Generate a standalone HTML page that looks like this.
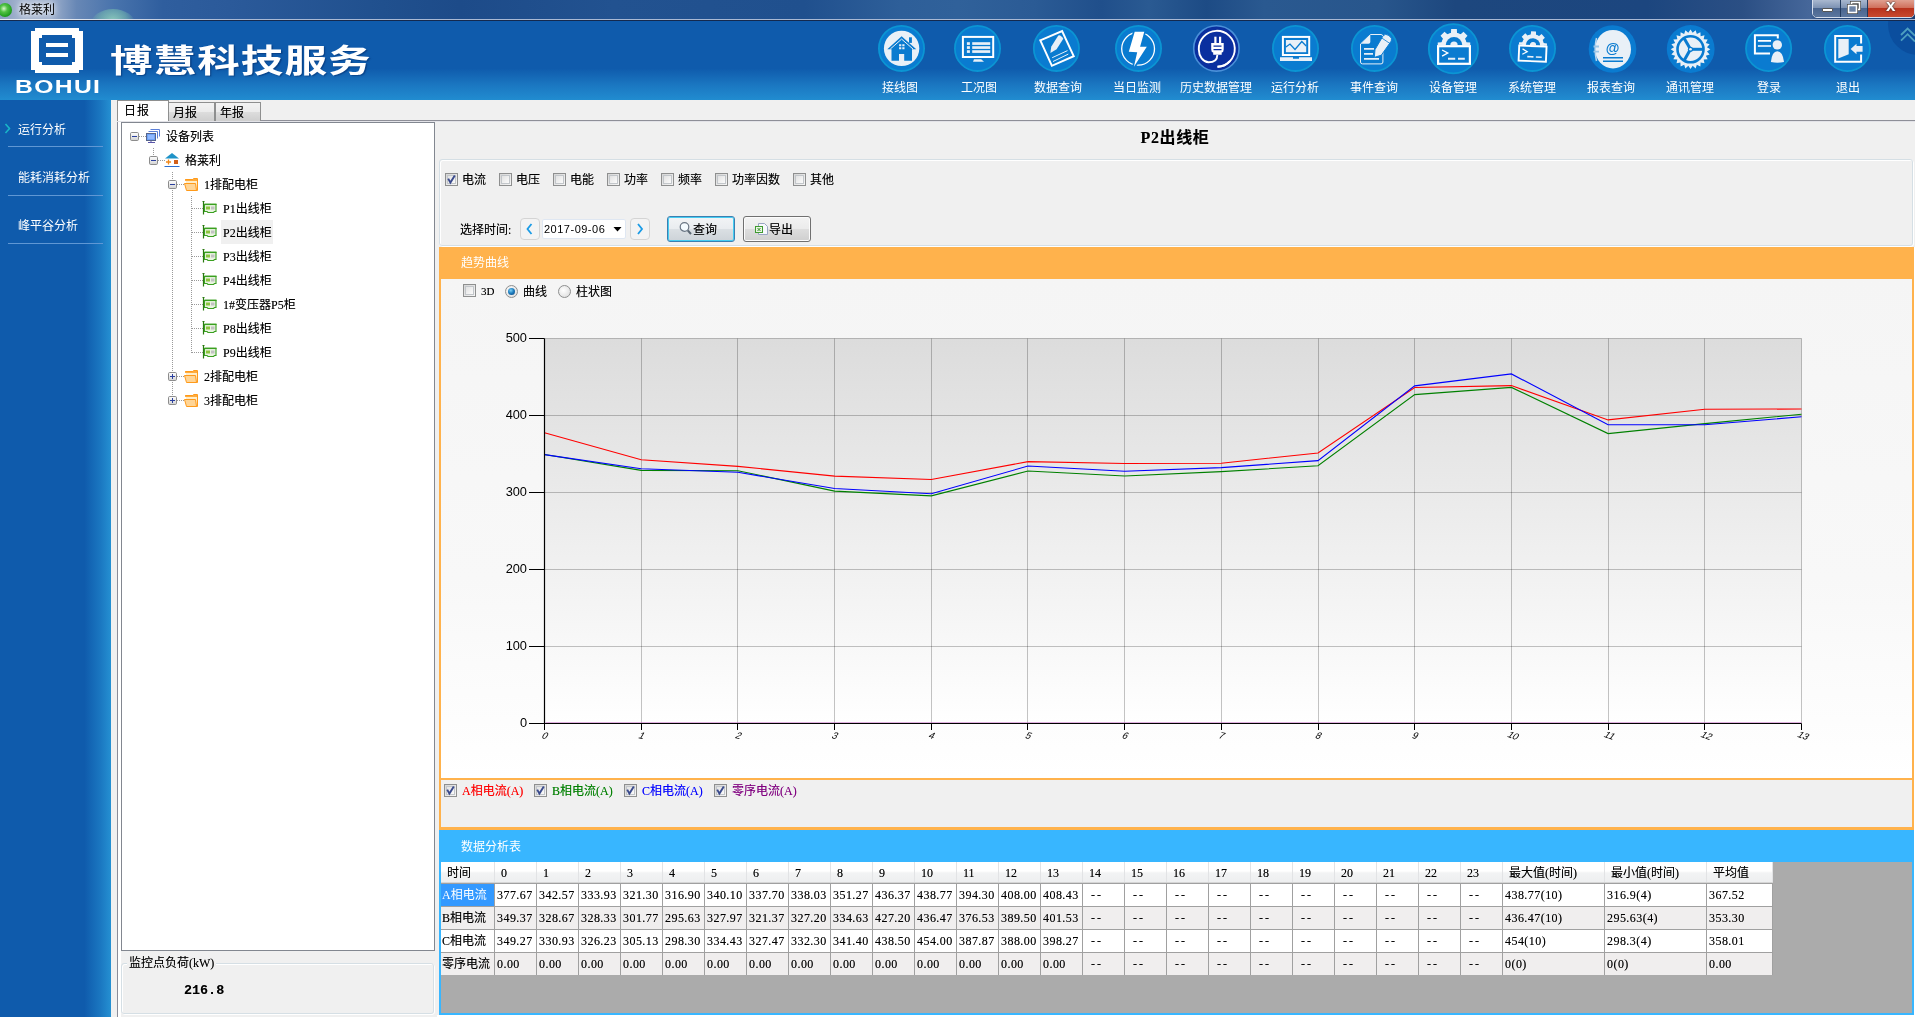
<!DOCTYPE html><html><head><meta charset="utf-8"><title>格莱利</title><style>
*{box-sizing:border-box;margin:0;padding:0}
html,body{width:1915px;height:1017px;overflow:hidden;background:#f0f0f0}
body{position:relative;font-family:"Liberation Serif","Noto Sans CJK SC",serif;font-size:12px;color:#000;line-height:14px}
.a{position:absolute}
.t{position:absolute;white-space:nowrap;line-height:14px;height:14px;text-shadow:0 0 0 rgba(0,0,0,.45)}
#titlebar{left:0;top:0;width:1915px;height:19px;background:linear-gradient(to right,#8a9fc0 0,#a5b5d0 1.2%,#a0b1cd 2.6%,#6787b5 4%,#4873ac 6%,#2f5e9e 8.500%,#2b5a9a 12%,#20508e 20%,#1d4b89 24%,#225290 32%,#20508e 42%,#2e5f99 47%,#30619a 50%,#2b5b95 54%,#204f8b 57.500%,#2a5a92 60%,#1d4b85 63%,#2a5990 66%,#28568c 72%,#1d477e 76%,#1c467f 86%,#2b4f84 91%,#46679a 94.500%,#2a4a7c 95%,#1a3f74 100%)}
#hdr{left:0;top:21px;width:1915px;height:79px;background:linear-gradient(#0f5bac 0,#0f5bac 60%,#1b78c2 82%,#218cd0 100%)}
#side{left:0;top:100px;width:111px;height:917px;background:linear-gradient(to right,#0f5bac 0,#0f5bac 76%,#1a76c0 90%,#2590d2 100%)}
.sl{position:absolute;left:8px;width:95px;height:1px;background:#5f97d4}
.st{position:absolute;left:18px;color:#fff;font-size:12px;white-space:nowrap;line-height:14px}
.nav{position:absolute;top:21px;width:79px;height:79px;text-align:center}
.nav .c{position:absolute;left:15px;top:3px;width:49px;height:49px;border-radius:50%;background:#0a7bd0;border:2px solid #0d8fd6}
.nav svg{position:absolute;left:15px;top:3px;width:49px;height:49px}
.nav .l{position:absolute;left:-10px;width:99px;top:59px;color:#fff;font-size:12px;line-height:14px;text-align:center;white-space:nowrap}
.cb{position:absolute;width:13px;height:13px;border:1px solid #8e8f8f;background:linear-gradient(135deg,#d6d6d6,#f6f6f6)}
.cb i{position:absolute;left:1px;top:1px;width:9px;height:9px;border:1px solid #c2c6ca;background:linear-gradient(135deg,#e2e2e2,#fbfbfb)}
.cb svg{position:absolute;left:0;top:0}
.rb{position:absolute;width:13px;height:13px;border-radius:50%;border:1px solid #8e8f8f;background:radial-gradient(circle at 40% 40%,#fff,#d8d8d8)}
</style></head><body><div id="w" style="position:absolute;left:0;top:0;width:1915px;height:1017px;will-change:transform">
<div id="titlebar" class="a"></div>
<div class="a" style="left:0;top:19px;width:1915px;height:1px;background:linear-gradient(to right,#e8edf4 0,#dfe5ef 4%,#a9b9d4 12%,#a9b9d4 100%)"></div>
<div class="a" style="left:0;top:20px;width:1915px;height:1px;background:#14294e"></div>
<div class="a" style="left:88px;top:6px;width:50px;height:13px;overflow:hidden"><div class="a" style="left:3px;top:3px;width:44px;height:30px;border-radius:50%;background:radial-gradient(ellipse at 50% 40%,rgba(150,215,190,.85) 0,rgba(120,190,175,.55) 45%,rgba(90,150,170,0) 72%)"></div></div>
<div class="a" style="left:-2px;top:3px;width:14px;height:14px;border-radius:50%;background:radial-gradient(circle at 42% 40%,#dcf6cc 0,#52c244 30%,#1d9a1d 70%,#118011 100%)"></div>
<div class="t" style="left:19px;top:3px;font-size:12px;color:#000;text-shadow:0 0 5px #fff,0 0 8px #fff">格莱利</div>
<div class="a" style="left:1812px;top:-3px;width:103px;height:21px;border:1px solid #d6dfee;border-radius:0 0 5px 5px;background:#223a5e"></div>
<div class="a" style="left:1813px;top:0;width:27px;height:17px;border-radius:0 0 0 4px;background:linear-gradient(#a9b8cf 0,#7e93b4 45%,#4a658f 50%,#5b769e 100%)"></div>
<div class="a" style="left:1841px;top:0;width:26px;height:17px;background:linear-gradient(#a9b8cf 0,#7e93b4 45%,#4a658f 50%,#5b769e 100%)"></div>
<div class="a" style="left:1868px;top:0;width:46px;height:17px;border-radius:0 0 4px 0;background:linear-gradient(#e0a090 0,#d0705c 45%,#b8321c 50%,#c8492e 100%)"></div>
<div class="a" style="left:1822px;top:8px;width:11px;height:4px;background:#fff;border:1px solid #555;border-radius:1px"></div>
<svg class="a" style="left:1846px;top:1px" width="16" height="13" viewBox="0 0 16 13"><rect x="5.5" y="1.5" width="8" height="7" fill="none" stroke="#444" stroke-width="3"/><rect x="5.5" y="1.5" width="8" height="7" fill="none" stroke="#fff" stroke-width="1.6"/><rect x="2.5" y="4.5" width="8" height="7" fill="#6d83a6" stroke="#444" stroke-width="3"/><rect x="2.5" y="4.5" width="8" height="7" fill="#6d83a6" stroke="#fff" stroke-width="1.6"/></svg>
<div class="t" style="left:1886px;top:-3px;font-family:'Liberation Sans',sans-serif;font-weight:bold;font-size:17px;line-height:18px;height:18px;color:#fff;text-shadow:0 0 1px #333,0 0 2px #333">x</div>
<div id="hdr" class="a"></div>
<svg class="a" style="left:30px;top:27px" width="54" height="47" viewBox="0 0 54 47"><path d="M5 1h44v3h4v39h-4v3H5v-3H1V4h4z" fill="#fff"/><path d="M12 8h30v3h3v24h-3v3H12v-3H9V11h3z" fill="#0f5bac"/><rect x="16" y="16" width="22" height="4" fill="#fff"/><rect x="16" y="26" width="22" height="4" fill="#fff"/></svg>
<div class="t" style="left:15px;top:77px;font-family:'Liberation Sans',sans-serif;font-weight:bold;font-size:18px;line-height:20px;height:20px;color:#fff;letter-spacing:1px;text-shadow:none;transform:scaleX(1.37);transform-origin:0 0">BOHUI</div>
<div class="t" style="left:110px;top:41px;font-family:'Liberation Sans','Noto Sans CJK SC',sans-serif;font-weight:bold;font-size:32px;line-height:40px;height:40px;color:#fff;letter-spacing:.8px;transform:scaleX(1.33);transform-origin:0 0;text-shadow:1px 1px 1px rgba(0,40,100,.5)">博慧科技服务</div>
<svg class="a" style="left:871px;top:21px" width="60" height="58" viewBox="871 21 60 58"><circle cx="901.5" cy="48.4" r="22.60" fill="#0a7bd0" stroke="#0b95d3" stroke-width="1.8"/><circle cx="901.6" cy="48.4" r="17.7" fill="#e9f0f7"/><path d="M901.6 36.300L916.300 49.200H912V60.700H904.200V54.100H899V60.700H891.500V49.200H887.300z" fill="#0a7bd0"/><path d="M890.300 49L901.600 39.100L913 49" fill="none" stroke="#e9f0f7" stroke-width="1"/><rect x="909" y="37.300" width="2.900" height="5.600" fill="#0a7bd0"/><path d="M899.100 44.200h2.200v2h-2.200zM902.300 44.200h2.200v2h-2.200zM899.100 47.200h2.200v2h-2.200zM902.300 47.200h2.200v2h-2.200z" fill="#e9f0f7"/></svg>
<div class="t" style="left:840px;top:81px;width:120px;text-align:center;color:#fff;text-shadow:none">接线图</div>
<svg class="a" style="left:947px;top:21px" width="60" height="58" viewBox="947 21 60 58"><circle cx="977.5" cy="48.4" r="22.60" fill="#0a7bd0" stroke="#0b95d3" stroke-width="1.8"/><rect x="962.900" y="36.900" width="30.300" height="20.100" fill="none" stroke="#ffffff" stroke-width="2"/><path d="M974 59.200H981.200L984 61.800H973z" fill="#e9f0f7"/><rect x="966.900" y="42.2" width="3" height="2.700" fill="#e9f0f7"/><rect x="972.200" y="42.2" width="18" height="2.700" fill="#e9f0f7"/><rect x="966.900" y="46.2" width="3" height="2.700" fill="#e9f0f7"/><rect x="972.200" y="46.2" width="18" height="2.700" fill="#e9f0f7"/><rect x="966.900" y="50.2" width="3" height="2.700" fill="#e9f0f7"/><rect x="972.200" y="50.2" width="18" height="2.700" fill="#e9f0f7"/></svg>
<div class="t" style="left:919px;top:81px;width:120px;text-align:center;color:#fff;text-shadow:none">工况图</div>
<svg class="a" style="left:1026px;top:21px" width="60" height="58" viewBox="1026 21 60 58"><circle cx="1056.4" cy="48.4" r="22.60" fill="#0a7bd0" stroke="#0b95d3" stroke-width="1.8"/><path d="M1040.300 40.300L1062.100 31L1073.700 56.200L1051.900 65.800z" fill="none" stroke="#ffffff" stroke-width="2" stroke-linejoin="miter"/><path d="M1058.300 35.500Q1060.500 34.300 1063.300 38.800L1056.600 49.300L1050.400 53L1051.200 46.800z" fill="#e9f0f7"/><path d="M1052.200 57.700L1067.500 50.600M1053 61.500L1068.300 54.100" stroke="#e9f0f7" stroke-width="1" fill="none"/></svg>
<div class="t" style="left:998px;top:81px;width:120px;text-align:center;color:#fff;text-shadow:none">数据查询</div>
<svg class="a" style="left:1108px;top:21px" width="60" height="58" viewBox="1108 21 60 58"><circle cx="1138.5" cy="48.4" r="22.60" fill="#0a7bd0" stroke="#0b95d3" stroke-width="1.8"/><circle cx="1138.100" cy="48.800" r="16.400" fill="none" stroke="#ffffff" stroke-width="1.300"/><path d="M1134.700 31.700H1144.300L1140.100 46.800H1146.800L1133.900 66.800L1137.200 52.200L1128.800 51.800z" fill="#0a7bd0" stroke="#0a7bd0" stroke-width="3.400" stroke-linejoin="miter"/><path d="M1134.700 31.700H1144.300L1140.100 46.800H1146.800L1133.900 66.800L1137.200 52.200L1128.800 51.800z" fill="#ffffff"/></svg>
<div class="t" style="left:1077px;top:81px;width:120px;text-align:center;color:#fff;text-shadow:none">当日监测</div>
<svg class="a" style="left:1186px;top:21px" width="60" height="58" viewBox="1186 21 60 58"><circle cx="1216.4" cy="48.4" r="22.70" fill="#0a2f9f" stroke="#4a90d8" stroke-width="1.6"/><path d="M1217.500 66.800A18 18 0 1 0 1198.800 49.500A10 13 0 0 0 1208.500 62.300C1214 62.300 1217.300 60 1217.300 55" fill="none" stroke="#ffffff" stroke-width="1.900"/><path d="M1217.500 66.800A18 18 0 0 0 1230 61" fill="none" stroke="#ffffff" stroke-width="1.900"/><path d="M1211.200 43H1223.700V49.500Q1223.700 52 1221.700 52.500V54.700H1213.200V52.500Q1211.200 52 1211.200 49.500z" fill="#ffffff"/><rect x="1214.300" y="36.700" width="2.200" height="6.500" fill="#ffffff"/><rect x="1219" y="36.700" width="2.200" height="6.500" fill="#ffffff"/><path d="M1213.500 46.200H1221.500M1213.500 49.700H1221.500" stroke="#0a2f9f" stroke-width="1.300"/></svg>
<div class="t" style="left:1156px;top:81px;width:120px;text-align:center;color:#fff;text-shadow:none">历史数据管理</div>
<svg class="a" style="left:1265px;top:21px" width="60" height="58" viewBox="1265 21 60 58"><circle cx="1295.5" cy="48.4" r="22.60" fill="#0a7bd0" stroke="#0b95d3" stroke-width="1.8"/><rect x="1282.900" y="36.900" width="26.300" height="18.100" fill="none" stroke="#ffffff" stroke-width="2"/><rect x="1285.900" y="40" width="20.300" height="12.200" fill="#e9f0f7"/><path d="M1285.900 47L1290 44L1295 49.500L1301.800 41.500L1306.200 46" fill="none" stroke="#0a7bd0" stroke-width="1.300"/><path d="M1280 57.200H1293V58.700H1299V57.200H1312V61H1280z" fill="#e9f0f7"/></svg>
<div class="t" style="left:1235px;top:81px;width:120px;text-align:center;color:#fff;text-shadow:none">运行分析</div>
<svg class="a" style="left:1344px;top:21px" width="60" height="58" viewBox="1344 21 60 58"><circle cx="1374.5" cy="48.4" r="22.60" fill="#0a7bd0" stroke="#0b95d3" stroke-width="1.8"/><path d="M1370.500 34.500H1381Q1382.900 34.500 1382.900 36.500V62Q1382.900 63.900 1381 63.900H1362.500Q1360.500 63.900 1360.500 62V44z" fill="none" stroke="#e9f0f7" stroke-width="1"/><path d="M1361 43.800L1370.300 34.800V42Q1370.300 43.800 1368.500 43.800z" fill="#e9f0f7"/><path d="M1364 48.800H1374M1364 53.900H1373M1364 58.900H1379" stroke="#e9f0f7" stroke-width="1.800" fill="none"/><path d="M1383.200 35.600Q1385.300 33.200 1388.800 35.400Q1392.800 38.200 1391.300 41L1381.300 55.200L1374.300 57.400L1375 49.600z" fill="#e9f0f7" stroke="#0a7bd0" stroke-width="1"/><path d="M1381.500 37.800L1389.800 43.400" stroke="#0a7bd0" stroke-width=".800"/></svg>
<div class="t" style="left:1314px;top:81px;width:120px;text-align:center;color:#fff;text-shadow:none">事件查询</div>
<svg class="a" style="left:1423px;top:21px" width="60" height="58" viewBox="1423 21 60 58"><circle cx="1453.4" cy="48.8" r="24.60" fill="#0a7bd0" stroke="#0b95d3" stroke-width="1.8"/><g transform="translate(1454.0 48.8) rotate(0.0) scale(1.000)"><clipPath id="cg1454"><rect x="-20" y="-24" width="40" height="20.500"/></clipPath><g clip-path="url(#cg1454)"><path d="M-3.07 -15.62L-2.84 -19.75L2.84 -19.75L3.07 -15.62L6.39 -14.24L9.49 -17.00L13.50 -12.99L10.74 -9.89L12.12 -6.57L16.25 -6.34L16.25 -0.66L12.12 -0.43L10.74 2.89L13.50 5.99L9.49 10.00L6.39 7.24L3.07 8.62L2.84 12.75L-2.84 12.75L-3.07 8.62L-6.39 7.24L-9.49 10.00L-13.50 5.99L-10.74 2.89L-12.12 -0.43L-16.25 -0.66L-16.25 -6.34L-12.12 -6.57L-10.74 -9.89L-13.50 -12.99L-9.49 -17.00L-6.39 -14.24z" fill="#e9f0f7"/><circle cx="0" cy="-3.500" r="12.800" fill="#e9f0f7"/><circle cx="0" cy="-3.500" r="8.300" fill="#0a7bd0"/><circle cx="0" cy="-3.500" r="3.700" fill="#e9f0f7"/></g><rect x="-15.900" y="-2.600" width="31.800" height="17.600" fill="#0a7bd0" stroke="#ffffff" stroke-width="2.200"/><path d="M-11.900 1.200L-6.300 4.200L-11.900 7.400" fill="none" stroke="#ffffff" stroke-width="1.400"/><path d="M-6 9.900H1.200M4 9.900H10.800" stroke="#e9f0f7" stroke-width="1.900"/></g></svg>
<div class="t" style="left:1393px;top:81px;width:120px;text-align:center;color:#fff;text-shadow:none">设备管理</div>
<svg class="a" style="left:1502px;top:21px" width="60" height="58" viewBox="1502 21 60 58"><circle cx="1532.5" cy="48.4" r="22.60" fill="#0a7bd0" stroke="#0b95d3" stroke-width="1.8"/><g transform="translate(1532.8 48.3) rotate(2.5) scale(0.860)"><clipPath id="cg1532"><rect x="-20" y="-24" width="40" height="20.500"/></clipPath><g clip-path="url(#cg1532)"><path d="M-3.07 -15.62L-2.84 -19.75L2.84 -19.75L3.07 -15.62L6.39 -14.24L9.49 -17.00L13.50 -12.99L10.74 -9.89L12.12 -6.57L16.25 -6.34L16.25 -0.66L12.12 -0.43L10.74 2.89L13.50 5.99L9.49 10.00L6.39 7.24L3.07 8.62L2.84 12.75L-2.84 12.75L-3.07 8.62L-6.39 7.24L-9.49 10.00L-13.50 5.99L-10.74 2.89L-12.12 -0.43L-16.25 -0.66L-16.25 -6.34L-12.12 -6.57L-10.74 -9.89L-13.50 -12.99L-9.49 -17.00L-6.39 -14.24z" fill="#e9f0f7"/><circle cx="0" cy="-3.500" r="12.800" fill="#e9f0f7"/><circle cx="0" cy="-3.500" r="8.300" fill="#0a7bd0"/><circle cx="0" cy="-3.500" r="3.700" fill="#e9f0f7"/></g><rect x="-15.900" y="-2.600" width="31.800" height="17.600" fill="#0a7bd0" stroke="#ffffff" stroke-width="2.200"/><path d="M-11.900 1.200L-6.300 4.200L-11.900 7.400" fill="none" stroke="#ffffff" stroke-width="1.400"/><path d="M-6 9.900H1.200M4 9.900H10.800" stroke="#e9f0f7" stroke-width="1.900"/></g></svg>
<div class="t" style="left:1472px;top:81px;width:120px;text-align:center;color:#fff;text-shadow:none">系统管理</div>
<svg class="a" style="left:1582px;top:21px" width="60" height="58" viewBox="1582 21 60 58"><circle cx="1612.5" cy="49.0" r="23.800" fill="#0a7bd0"/><ellipse cx="1613" cy="49.200" rx="18" ry="19.300" fill="#e9f0f7"/><path d="M1596.500 38Q1593.800 49 1596.500 61" fill="none" stroke="#b9d6ee" stroke-width="1.500"/><path d="M1593.500 46.500H1599M1593.500 51.700H1599" stroke="#9cc6e6" stroke-width="1.800"/><text x="1612.500" y="53" font-family="Liberation Sans, sans-serif" font-size="14" font-weight="bold" text-anchor="middle" fill="#0a7bd0">@</text><path d="M1603 57.800H1623M1603 61.200H1623" stroke="#0a7bd0" stroke-width="1.500"/></svg>
<div class="t" style="left:1551px;top:81px;width:120px;text-align:center;color:#fff;text-shadow:none">报表查询</div>
<svg class="a" style="left:1660px;top:21px" width="60" height="58" viewBox="1660 21 60 58"><circle cx="1690.7" cy="49.0" r="23.900" fill="#0a7bd0"/><path d="M1710.30 49.30L1706.96 51.47L1709.63 54.42L1705.84 55.65L1707.65 59.20L1703.67 59.41L1704.50 63.30L1700.61 62.47L1700.40 66.45L1696.85 64.64L1695.62 68.43L1692.67 65.76L1690.50 69.10L1688.33 65.76L1685.38 68.43L1684.15 64.64L1680.60 66.45L1680.39 62.47L1676.50 63.30L1677.33 59.41L1673.35 59.20L1675.16 55.65L1671.37 54.42L1674.04 51.47L1670.70 49.30L1674.04 47.13L1671.37 44.18L1675.16 42.95L1673.35 39.40L1677.33 39.19L1676.50 35.30L1680.39 36.13L1680.60 32.15L1684.15 33.96L1685.38 30.17L1688.33 32.84L1690.50 29.50L1692.67 32.84L1695.62 30.17L1696.85 33.96L1700.40 32.15L1700.61 36.13L1704.50 35.30L1703.67 39.19L1707.65 39.40L1705.84 42.95L1709.63 44.18L1706.96 47.13 z" fill="#e9f0f7"/><circle cx="1690.5" cy="49.3" r="13" fill="#e9f0f7" stroke="#0a7bd0" stroke-width="2.600"/><path d="M1690.50 49.30L1703.00 49.30" stroke="#0a7bd0" stroke-width="3"/><path d="M1690.50 49.30L1684.25 60.13" stroke="#0a7bd0" stroke-width="3"/><path d="M1690.50 49.30L1684.25 38.47" stroke="#0a7bd0" stroke-width="3"/><circle cx="1690.5" cy="49.3" r="2.600" fill="#0a7bd0"/><circle cx="1690.5" cy="49.3" r="1.300" fill="#e9f0f7"/></svg>
<div class="t" style="left:1630px;top:81px;width:120px;text-align:center;color:#fff;text-shadow:none">通讯管理</div>
<svg class="a" style="left:1738px;top:21px" width="60" height="58" viewBox="1738 21 60 58"><circle cx="1768.6" cy="48.5" r="22.60" fill="#0a7bd0" stroke="#0b95d3" stroke-width="1.8"/><path d="M1777.800 38.500V35.200H1754.900V53.600H1770" fill="none" stroke="#ffffff" stroke-width="2"/><path d="M1757.900 40.900H1771M1757.900 46H1771" stroke="#ffffff" stroke-width="1.600"/><circle cx="1777.300" cy="44.900" r="5.600" fill="#0a7bd0"/><circle cx="1777.300" cy="44.900" r="4.700" fill="#e9f0f7"/><path d="M1769.800 63.500Q1771 50.200 1777.300 50.200Q1783.800 50.200 1785 63.500z" fill="#0a7bd0"/><path d="M1770.900 62Q1772 51.200 1777.300 51.200Q1782.800 51.200 1784 62Q1777.500 63.300 1770.900 62z" fill="#e9f0f7"/></svg>
<div class="t" style="left:1709px;top:81px;width:120px;text-align:center;color:#fff;text-shadow:none">登录</div>
<svg class="a" style="left:1817px;top:21px" width="60" height="58" viewBox="1817 21 60 58"><circle cx="1847.4" cy="48.5" r="22.60" fill="#0a7bd0" stroke="#0b95d3" stroke-width="1.8"/><path d="M1861.100 43.500V35.900H1835.200V61.800H1861.100V54.500" fill="none" stroke="#ffffff" stroke-width="2"/><path d="M1838.300 38.900H1848.700V54.300L1838.300 58.400z" fill="#e9f0f7"/><path d="M1850.600 48.900L1856.500 43.800V46H1862.600V51.800H1856.500V54.300z" fill="#e9f0f7"/></svg>
<div class="t" style="left:1788px;top:81px;width:120px;text-align:center;color:#fff;text-shadow:none">退出</div>
<div class="a" style="left:1885px;top:21px;width:30px;height:40px;overflow:hidden"><div class="a" style="left:2.500px;top:-27.500px;width:61px;height:61px;border-radius:50%;background:#0b4e9e"></div></div>
<svg class="a" style="left:1898px;top:27px" width="17" height="17" viewBox="0 0 17 17"><path d="M3 8L9.600 1.500L17 8.800M3 13.700L9.600 7.200L17 14.500" fill="none" stroke="#4d9fc0" stroke-width="1.800"/></svg>
<div id="side" class="a"></div>
<svg class="a" style="left:4px;top:123px" width="7" height="11" viewBox="0 0 7 11"><path d="M1.5 1L5.5 5.5L1.5 10" fill="none" stroke="#19b5c8" stroke-width="1.6"/></svg>
<div class="st" style="top:123px">运行分析</div>
<div class="sl" style="top:146px"></div>
<div class="st" style="top:171px">能耗消耗分析</div>
<div class="sl" style="top:195px"></div>
<div class="st" style="top:219px">峰平谷分析</div>
<div class="sl" style="top:243px"></div>
<svg class="a" style="left:111px;top:533px" width="6" height="53" viewBox="0 0 6 53"><defs><linearGradient id="hg" x1="0" y1="0" x2="0" y2="1"><stop offset="0" stop-color="#1a62b8"/><stop offset="1" stop-color="#1f7dc5"/></linearGradient></defs><path d="M0 0L5.200 3V49.500L0 53z" fill="url(#hg)"/><path d="M4.300 22L1.200 26.500L4.300 31" fill="none" stroke="#fff" stroke-width="1.200"/></svg>
<div class="a" style="left:111px;top:100px;width:6px;height:917px;background:#f0f0f0"></div><div class="a" style="left:118px;top:121px;width:3px;height:896px;background:#fff"></div>
<div class="a" style="left:117px;top:100px;width:1px;height:917px;background:#8a8c99"></div>
<div class="a" style="left:117px;top:120px;width:1798px;height:1px;background:#8e8f98"></div>
<div class="a" style="left:117px;top:121px;width:1798px;height:1px;background:#e3e3e8"></div>
<div class="a" style="left:168px;top:102px;width:47px;height:19px;border:1px solid #8e8f8f;border-bottom:none;background:linear-gradient(#f2f2f2 0,#ebebeb 50%,#dddddd 50%,#cfcfcf 100%)"></div>
<div class="t" style="left:173px;top:106px">月报</div>
<div class="a" style="left:215px;top:102px;width:46px;height:19px;border:1px solid #8e8f8f;border-bottom:none;background:linear-gradient(#f2f2f2 0,#ebebeb 50%,#dddddd 50%,#cfcfcf 100%)"></div>
<div class="t" style="left:220px;top:106px">年报</div>
<div class="a" style="left:117px;top:100px;width:52px;height:21px;border:1px solid #8e8f8f;border-bottom:none;background:#fff"></div>
<div class="t" style="left:124px;top:104px;letter-spacing:1px">日报</div>
<div class="a" style="left:121px;top:122px;width:314px;height:829px;border:1px solid #828790;background:#fff"></div>
<div class="a" style="left:221px;top:220px;width:52px;height:24px;background:#f0f0f0"></div>
<div class="a" style="left:153px;top:148px;width:1px;height:8px;background:repeating-linear-gradient(to bottom,#9a9a9a 0,#9a9a9a 1px,transparent 1px,transparent 2px)"></div>
<div class="a" style="left:172px;top:172px;width:1px;height:225px;background:repeating-linear-gradient(to bottom,#9a9a9a 0,#9a9a9a 1px,transparent 1px,transparent 2px)"></div>
<div class="a" style="left:191px;top:196px;width:1px;height:157px;background:repeating-linear-gradient(to bottom,#9a9a9a 0,#9a9a9a 1px,transparent 1px,transparent 2px)"></div>
<div class="a" style="left:139px;top:136px;width:7px;height:1px;background:repeating-linear-gradient(to right,#9a9a9a 0,#9a9a9a 1px,transparent 1px,transparent 2px)"></div>
<div class="a" style="left:158px;top:160px;width:7px;height:1px;background:repeating-linear-gradient(to right,#9a9a9a 0,#9a9a9a 1px,transparent 1px,transparent 2px)"></div>
<div class="a" style="left:177px;top:184px;width:7px;height:1px;background:repeating-linear-gradient(to right,#9a9a9a 0,#9a9a9a 1px,transparent 1px,transparent 2px)"></div>
<div class="a" style="left:192px;top:208px;width:11px;height:1px;background:repeating-linear-gradient(to right,#9a9a9a 0,#9a9a9a 1px,transparent 1px,transparent 2px)"></div>
<div class="a" style="left:192px;top:232px;width:11px;height:1px;background:repeating-linear-gradient(to right,#9a9a9a 0,#9a9a9a 1px,transparent 1px,transparent 2px)"></div>
<div class="a" style="left:192px;top:256px;width:11px;height:1px;background:repeating-linear-gradient(to right,#9a9a9a 0,#9a9a9a 1px,transparent 1px,transparent 2px)"></div>
<div class="a" style="left:192px;top:280px;width:11px;height:1px;background:repeating-linear-gradient(to right,#9a9a9a 0,#9a9a9a 1px,transparent 1px,transparent 2px)"></div>
<div class="a" style="left:192px;top:304px;width:11px;height:1px;background:repeating-linear-gradient(to right,#9a9a9a 0,#9a9a9a 1px,transparent 1px,transparent 2px)"></div>
<div class="a" style="left:192px;top:328px;width:11px;height:1px;background:repeating-linear-gradient(to right,#9a9a9a 0,#9a9a9a 1px,transparent 1px,transparent 2px)"></div>
<div class="a" style="left:192px;top:352px;width:11px;height:1px;background:repeating-linear-gradient(to right,#9a9a9a 0,#9a9a9a 1px,transparent 1px,transparent 2px)"></div>
<div class="a" style="left:177px;top:376px;width:7px;height:1px;background:repeating-linear-gradient(to right,#9a9a9a 0,#9a9a9a 1px,transparent 1px,transparent 2px)"></div>
<div class="a" style="left:177px;top:400px;width:7px;height:1px;background:repeating-linear-gradient(to right,#9a9a9a 0,#9a9a9a 1px,transparent 1px,transparent 2px)"></div>
<svg class="a" style="left:130px;top:132px" width="9" height="9" viewBox="0 0 9 9"><defs><linearGradient id="bx" x1="0" y1="0" x2="0" y2="1"><stop offset="0" stop-color="#fff"/><stop offset="1" stop-color="#d2d2d2"/></linearGradient></defs><rect x=".5" y=".5" width="8" height="8" rx="1.200" fill="url(#bx)" stroke="#8c8c8c"/><path d="M2 4.5H7" stroke="#2a3f9d" stroke-width="1"/></svg>
<svg class="a" style="left:145px;top:128px" width="16" height="16" viewBox="0 0 16 16"><path d="M5.5 1.5H14.5V8.5" fill="none" stroke="#5b7fd8"/><path d="M3.5 3.5H12.5V10.5" fill="none" stroke="#5b7fd8"/><rect x="1.500" y="5.500" width="9" height="7" fill="#6ea2f5" stroke="#56648c"/><rect x="3" y="7" width="6" height="4" fill="#8fb8ff"/><path d="M6 13V14.500M3 14.500H10" stroke="#5a55a8" fill="none"/></svg>
<div class="t" style="left:166px;top:130px">设备列表</div>
<svg class="a" style="left:149px;top:156px" width="9" height="9" viewBox="0 0 9 9"><defs><linearGradient id="bx" x1="0" y1="0" x2="0" y2="1"><stop offset="0" stop-color="#fff"/><stop offset="1" stop-color="#d2d2d2"/></linearGradient></defs><rect x=".5" y=".5" width="8" height="8" rx="1.200" fill="url(#bx)" stroke="#8c8c8c"/><path d="M2 4.5H7" stroke="#2a3f9d" stroke-width="1"/></svg>
<svg class="a" style="left:164px;top:151px" width="16" height="16" viewBox="0 0 16 16"><path d="M1 7.500L8 2L15 7.500z" fill="#1f93c8"/><path d="M2 11H7M4.500 8.500V13.500" stroke="#f08a1c" stroke-width="1.300" fill="none"/><rect x="10" y="9" width="4" height="4" fill="#d2601a"/><path d="M0.500 15.500H15.500" stroke="#2b6fd0" stroke-width="1"/></svg>
<div class="t" style="left:185px;top:154px">格莱利</div>
<svg class="a" style="left:168px;top:180px" width="9" height="9" viewBox="0 0 9 9"><defs><linearGradient id="bx" x1="0" y1="0" x2="0" y2="1"><stop offset="0" stop-color="#fff"/><stop offset="1" stop-color="#d2d2d2"/></linearGradient></defs><rect x=".5" y=".5" width="8" height="8" rx="1.200" fill="url(#bx)" stroke="#8c8c8c"/><path d="M2 4.5H7" stroke="#2a3f9d" stroke-width="1"/></svg>
<svg class="a" style="left:183px;top:176px" width="16" height="16" viewBox="0 0 16 16"><path d="M2.500 3.500H9.500L10.500 2.500H14.500V14.500H4.500" fill="#ffedc8" stroke="#ff9a1a"/><path d="M2 4H14" stroke="#ff9a1a" stroke-width="1.600"/><path d="M1.500 7.500H12.500L13.500 14.500H3.500z" fill="#ffd596" stroke="#ff9a1a"/></svg>
<div class="t" style="left:204px;top:178px">1排配电柜</div>
<svg class="a" style="left:202px;top:200px" width="16" height="16" viewBox="0 0 16 16"><path d="M1.500 1V14.500M0.500 1.500H2.500" stroke="#2a7a10" stroke-width="1.200"/><path d="M2.500 4.500H14V11.500H12.500L11.500 12.500H6L5 11.500H2.500z" fill="#e9f4e0" stroke="#3aa020" stroke-width="1.100"/><path d="M2.500 4.300H14.500" stroke="#3aa020" stroke-width="1.500"/><rect x="4" y="6.500" width="4" height="3" fill="#8cc63f"/><rect x="9" y="6.500" width="3.500" height="3" fill="#c2c2c2"/></svg>
<div class="t" style="left:223px;top:202px">P1出线柜</div>
<svg class="a" style="left:202px;top:224px" width="16" height="16" viewBox="0 0 16 16"><path d="M1.500 1V14.500M0.500 1.500H2.500" stroke="#2a7a10" stroke-width="1.200"/><path d="M2.500 4.500H14V11.500H12.500L11.500 12.500H6L5 11.500H2.500z" fill="#e9f4e0" stroke="#3aa020" stroke-width="1.100"/><path d="M2.500 4.300H14.500" stroke="#3aa020" stroke-width="1.500"/><rect x="4" y="6.500" width="4" height="3" fill="#8cc63f"/><rect x="9" y="6.500" width="3.500" height="3" fill="#c2c2c2"/></svg>
<div class="t" style="left:223px;top:226px">P2出线柜</div>
<svg class="a" style="left:202px;top:248px" width="16" height="16" viewBox="0 0 16 16"><path d="M1.500 1V14.500M0.500 1.500H2.500" stroke="#2a7a10" stroke-width="1.200"/><path d="M2.500 4.500H14V11.500H12.500L11.500 12.500H6L5 11.500H2.500z" fill="#e9f4e0" stroke="#3aa020" stroke-width="1.100"/><path d="M2.500 4.300H14.500" stroke="#3aa020" stroke-width="1.500"/><rect x="4" y="6.500" width="4" height="3" fill="#8cc63f"/><rect x="9" y="6.500" width="3.500" height="3" fill="#c2c2c2"/></svg>
<div class="t" style="left:223px;top:250px">P3出线柜</div>
<svg class="a" style="left:202px;top:272px" width="16" height="16" viewBox="0 0 16 16"><path d="M1.500 1V14.500M0.500 1.500H2.500" stroke="#2a7a10" stroke-width="1.200"/><path d="M2.500 4.500H14V11.500H12.500L11.500 12.500H6L5 11.500H2.500z" fill="#e9f4e0" stroke="#3aa020" stroke-width="1.100"/><path d="M2.500 4.300H14.500" stroke="#3aa020" stroke-width="1.500"/><rect x="4" y="6.500" width="4" height="3" fill="#8cc63f"/><rect x="9" y="6.500" width="3.500" height="3" fill="#c2c2c2"/></svg>
<div class="t" style="left:223px;top:274px">P4出线柜</div>
<svg class="a" style="left:202px;top:296px" width="16" height="16" viewBox="0 0 16 16"><path d="M1.500 1V14.500M0.500 1.500H2.500" stroke="#2a7a10" stroke-width="1.200"/><path d="M2.500 4.500H14V11.500H12.500L11.500 12.500H6L5 11.500H2.500z" fill="#e9f4e0" stroke="#3aa020" stroke-width="1.100"/><path d="M2.500 4.300H14.500" stroke="#3aa020" stroke-width="1.500"/><rect x="4" y="6.500" width="4" height="3" fill="#8cc63f"/><rect x="9" y="6.500" width="3.500" height="3" fill="#c2c2c2"/></svg>
<div class="t" style="left:223px;top:298px">1#变压器P5柜</div>
<svg class="a" style="left:202px;top:320px" width="16" height="16" viewBox="0 0 16 16"><path d="M1.500 1V14.500M0.500 1.500H2.500" stroke="#2a7a10" stroke-width="1.200"/><path d="M2.500 4.500H14V11.500H12.500L11.500 12.500H6L5 11.500H2.500z" fill="#e9f4e0" stroke="#3aa020" stroke-width="1.100"/><path d="M2.500 4.300H14.500" stroke="#3aa020" stroke-width="1.500"/><rect x="4" y="6.500" width="4" height="3" fill="#8cc63f"/><rect x="9" y="6.500" width="3.500" height="3" fill="#c2c2c2"/></svg>
<div class="t" style="left:223px;top:322px">P8出线柜</div>
<svg class="a" style="left:202px;top:344px" width="16" height="16" viewBox="0 0 16 16"><path d="M1.500 1V14.500M0.500 1.500H2.500" stroke="#2a7a10" stroke-width="1.200"/><path d="M2.500 4.500H14V11.500H12.500L11.500 12.500H6L5 11.500H2.500z" fill="#e9f4e0" stroke="#3aa020" stroke-width="1.100"/><path d="M2.500 4.300H14.500" stroke="#3aa020" stroke-width="1.500"/><rect x="4" y="6.500" width="4" height="3" fill="#8cc63f"/><rect x="9" y="6.500" width="3.500" height="3" fill="#c2c2c2"/></svg>
<div class="t" style="left:223px;top:346px">P9出线柜</div>
<svg class="a" style="left:168px;top:372px" width="9" height="9" viewBox="0 0 9 9"><defs><linearGradient id="bx" x1="0" y1="0" x2="0" y2="1"><stop offset="0" stop-color="#fff"/><stop offset="1" stop-color="#d2d2d2"/></linearGradient></defs><rect x=".5" y=".5" width="8" height="8" rx="1.200" fill="url(#bx)" stroke="#8c8c8c"/><path d="M2 4.5H7" stroke="#2a3f9d" stroke-width="1"/><path d="M4.5 2V7" stroke="#2a3f9d" stroke-width="1"/></svg>
<svg class="a" style="left:183px;top:368px" width="16" height="16" viewBox="0 0 16 16"><path d="M2.500 3.500H9.500L10.500 2.500H14.500V14.500H4.500" fill="#ffedc8" stroke="#ff9a1a"/><path d="M2 4H14" stroke="#ff9a1a" stroke-width="1.600"/><path d="M1.500 7.500H12.500L13.500 14.500H3.500z" fill="#ffd596" stroke="#ff9a1a"/></svg>
<div class="t" style="left:204px;top:370px">2排配电柜</div>
<svg class="a" style="left:168px;top:396px" width="9" height="9" viewBox="0 0 9 9"><defs><linearGradient id="bx" x1="0" y1="0" x2="0" y2="1"><stop offset="0" stop-color="#fff"/><stop offset="1" stop-color="#d2d2d2"/></linearGradient></defs><rect x=".5" y=".5" width="8" height="8" rx="1.200" fill="url(#bx)" stroke="#8c8c8c"/><path d="M2 4.5H7" stroke="#2a3f9d" stroke-width="1"/><path d="M4.5 2V7" stroke="#2a3f9d" stroke-width="1"/></svg>
<svg class="a" style="left:183px;top:392px" width="16" height="16" viewBox="0 0 16 16"><path d="M2.500 3.500H9.500L10.500 2.500H14.500V14.500H4.500" fill="#ffedc8" stroke="#ff9a1a"/><path d="M2 4H14" stroke="#ff9a1a" stroke-width="1.600"/><path d="M1.500 7.500H12.500L13.500 14.500H3.500z" fill="#ffd596" stroke="#ff9a1a"/></svg>
<div class="t" style="left:204px;top:394px">3排配电柜</div>
<div class="a" style="left:122px;top:964px;width:313px;height:51px;border:1px solid #fff;border-radius:3px"></div><div class="a" style="left:121px;top:963px;width:313px;height:51px;border:1px solid #d5dfe5;border-radius:3px"></div>
<div class="t" style="left:127px;top:956px;background:#f0f0f0;padding:0 2px">监控点负荷(kW)</div>
<div class="t" style="left:184px;top:984px;font-family:'Liberation Mono',monospace;font-weight:bold;font-size:13.4px">216.8</div>
<div class="t" style="left:1075px;top:129px;width:200px;text-align:center;font-weight:bold;font-size:16px;line-height:18px;height:18px;letter-spacing:.6px">P2出线柜</div>
<div class="a" style="left:440px;top:160px;width:1474px;height:87px;border:1px solid #fff;border-radius:3px"></div><div class="a" style="left:439px;top:159px;width:1474px;height:87px;border:1px solid #d5dfe5;border-radius:3px"></div>
<div class="cb" style="left:445px;top:173px"><i></i><svg width="11" height="11" viewBox="0 0 11 11"><path d="M2.2 4.6L4.4 8.600L8.800 1.600" fill="none" stroke="#3a4a8c" stroke-width="1.900" stroke-linecap="butt"/></svg></div>
<div class="t" style="left:462px;top:173px">电流</div>
<div class="cb" style="left:499px;top:173px"><i></i></div>
<div class="t" style="left:516px;top:173px">电压</div>
<div class="cb" style="left:553px;top:173px"><i></i></div>
<div class="t" style="left:570px;top:173px">电能</div>
<div class="cb" style="left:607px;top:173px"><i></i></div>
<div class="t" style="left:624px;top:173px">功率</div>
<div class="cb" style="left:661px;top:173px"><i></i></div>
<div class="t" style="left:678px;top:173px">频率</div>
<div class="cb" style="left:715px;top:173px"><i></i></div>
<div class="t" style="left:732px;top:173px">功率因数</div>
<div class="cb" style="left:793px;top:173px"><i></i></div>
<div class="t" style="left:810px;top:173px">其他</div>
<div class="t" style="left:460px;top:223px">选择时间:</div>
<div class="a" style="left:520px;top:218px;width:20px;height:22px;border:1px solid #d4d4d4;border-radius:4px;background:#f3f3f3"><svg class="a" style="left:-1px;top:-1px" width="20" height="22"><path d="M11.500 6L7.500 11L11.500 16" fill="none" stroke="#1a9be6" stroke-width="1.800"/></svg></div>
<div class="a" style="left:630px;top:218px;width:20px;height:22px;border:1px solid #d4d4d4;border-radius:4px;background:#f3f3f3"><svg class="a" style="left:-1px;top:-1px" width="20" height="22"><path d="M8 6L12 11L8 16" fill="none" stroke="#1a9be6" stroke-width="1.800"/></svg></div>
<div class="a" style="left:542px;top:219px;width:84px;height:20px;border:1px solid #dfe7f2;border-radius:2px;background:#fff"></div>
<div class="t" style="left:544px;top:222px;font-size:11px;letter-spacing:.5px;text-shadow:none;font-family:'Liberation Sans',sans-serif">2017-09-06</div>
<svg class="a" style="left:613px;top:227px" width="9" height="5"><path d="M0.500 0H8.500L4.500 4.500z" fill="#000"/></svg>
<div class="a" style="left:667px;top:216px;width:68px;height:26px;border:1px solid #3c7fb1;border-radius:3px;background:linear-gradient(#f2f4f6 0,#e9ecef 48%,#dadfe3 52%,#cdd3d8 100%);box-shadow:inset 0 0 0 1px #45cdf2"></div>
<svg class="a" style="left:679px;top:221px" width="14" height="15" viewBox="0 0 14 15"><circle cx="5.500" cy="6" r="4.300" fill="#f4fbff" stroke="#6a7684" stroke-width="1.200"/><path d="M8.800 9.500L12 13" stroke="#5c6874" stroke-width="2"/></svg>
<div class="t" style="left:693px;top:223px">查询</div>
<div class="a" style="left:743px;top:216px;width:68px;height:26px;border:1px solid #707070;border-radius:3px;background:linear-gradient(#f3f3f3 0,#ebebeb 48%,#dddddd 52%,#cfcfcf 100%);box-shadow:inset 0 0 0 1px #fcfcfc"></div>
<svg class="a" style="left:755px;top:222px" width="14" height="14" viewBox="0 0 14 14"><path d="M3.500 1.500H9.500L12.500 4.500V12.500H3.500z" fill="#f6f8fc" stroke="#9aa6c2"/><rect x="0.500" y="4.500" width="7" height="6" fill="#eaf6e4" stroke="#3f9a2f"/><path d="M2.500 6L5.500 9M5.500 6L2.500 9" stroke="#2f8a22" stroke-width="1"/></svg>
<div class="t" style="left:769px;top:223px">导出</div>
<div class="a" style="left:439px;top:247px;width:1475px;height:583px;background:#ffb24c"></div>
<div class="t" style="left:461px;top:256px;color:#fff;text-shadow:none">趋势曲线</div>
<div class="a" style="left:441px;top:279px;width:1471px;height:499px;background:linear-gradient(#f5f5f5 0,#f8f8f8 60%,#ffffff 100%)"></div>
<div class="a" style="left:441px;top:780px;width:1471px;height:47px;background:#f0f0f0"></div>
<div class="cb" style="left:463px;top:284px"><i></i></div>
<div class="t" style="left:481px;top:284px;font-size:11px">3D</div>
<div class="rb" style="left:505px;top:285px"><div class="a" style="left:2px;top:2px;width:7px;height:7px;border-radius:50%;background:radial-gradient(circle at 40% 35%,#7fd0f4 0,#1f7fc0 45%,#0b3f78 100%)"></div></div>
<div class="t" style="left:523px;top:285px">曲线</div>
<div class="rb" style="left:558px;top:285px"></div>
<div class="t" style="left:576px;top:285px">柱状图</div>
<svg class="a" style="left:441px;top:279px" width="1471" height="499" viewBox="441 279 1471 499" font-family="Liberation Sans, sans-serif"><defs><linearGradient id="pg" x1="0" y1="0" x2="0" y2="1"><stop offset="0" stop-color="#dcdcdc"/><stop offset="1" stop-color="#ffffff"/></linearGradient></defs><rect x="544.5" y="338.5" width="1257.0" height="385.0" fill="url(#pg)"/><path d="M641.5 338.5V723.5M737.5 338.5V723.5M834.5 338.5V723.5M931.5 338.5V723.5M1027.5 338.5V723.5M1124.5 338.5V723.5M1221.5 338.5V723.5M1318.5 338.5V723.5M1414.5 338.5V723.5M1511.5 338.5V723.5M1608.5 338.5V723.5M1704.5 338.5V723.5M1801.5 338.5V723.5M544.5 646.5H1801.5M544.5 569.5H1801.5M544.5 492.5H1801.5M544.5 415.5H1801.5M544.5 338.5H1801.5" stroke="#000" stroke-opacity=".23" stroke-width="1" fill="none"/><polyline points="544.5,432.7 641.2,459.7 737.9,466.4 834.6,476.1 931.3,479.5 1028.0,461.6 1124.7,463.5 1221.3,463.2 1318.0,453.0 1414.7,387.5 1511.4,385.6 1608.1,419.9 1704.8,409.3 1801.5,409.0" fill="none" stroke="#ff0000" stroke-width="1.100"/><polyline points="544.5,454.5 641.2,470.4 737.9,470.7 834.6,491.1 931.3,495.9 1028.0,471.0 1124.7,476.0 1221.3,471.6 1318.0,465.8 1414.7,394.6 1511.4,387.4 1608.1,433.6 1704.8,423.6 1801.5,414.3" fill="none" stroke="#008000" stroke-width="1.100"/><polyline points="544.5,454.6 641.2,468.7 737.9,472.3 834.6,488.5 931.3,493.8 1028.0,466.0 1124.7,471.3 1221.3,467.6 1318.0,460.6 1414.7,385.9 1511.4,373.9 1608.1,424.8 1704.8,424.7 1801.5,416.8" fill="none" stroke="#0000ff" stroke-width="1.100"/><path d="M544.5 338.5V723.5H1801.5" stroke="#000" stroke-width="1.200" fill="none"/><path d="M545.5 722.5H1801.5" stroke="#c060c0" stroke-width=".5" fill="none"/><path d="M529 723.5H544.5M529 646.5H544.5M529 569.5H544.5M529 492.5H544.5M529 415.5H544.5M529 338.5H544.5M544.5 723.5V730M641.5 723.5V730M737.5 723.5V730M834.5 723.5V730M931.5 723.5V730M1027.5 723.5V730M1124.5 723.5V730M1221.5 723.5V730M1318.5 723.5V730M1414.5 723.5V730M1511.5 723.5V730M1608.5 723.5V730M1704.5 723.5V730M1801.5 723.5V730" stroke="#000" stroke-width="1" fill="none"/><text x="527" y="727.0" font-size="12.800" text-anchor="end" fill="#000">0</text><text x="527" y="650.0" font-size="12.800" text-anchor="end" fill="#000">100</text><text x="527" y="573.0" font-size="12.800" text-anchor="end" fill="#000">200</text><text x="527" y="496.0" font-size="12.800" text-anchor="end" fill="#000">300</text><text x="527" y="419.0" font-size="12.800" text-anchor="end" fill="#000">400</text><text x="527" y="342.0" font-size="12.800" text-anchor="end" fill="#000">500</text><text transform="translate(541.0,738) rotate(12) skewX(-18)" font-size="9.500" fill="#000">0</text><text transform="translate(637.7,738) rotate(12) skewX(-18)" font-size="9.500" fill="#000">1</text><text transform="translate(734.4,738) rotate(12) skewX(-18)" font-size="9.500" fill="#000">2</text><text transform="translate(831.1,738) rotate(12) skewX(-18)" font-size="9.500" fill="#000">3</text><text transform="translate(927.8,738) rotate(12) skewX(-18)" font-size="9.500" fill="#000">4</text><text transform="translate(1024.5,738) rotate(12) skewX(-18)" font-size="9.500" fill="#000">5</text><text transform="translate(1121.2,738) rotate(12) skewX(-18)" font-size="9.500" fill="#000">6</text><text transform="translate(1217.8,738) rotate(12) skewX(-18)" font-size="9.500" fill="#000">7</text><text transform="translate(1314.5,738) rotate(12) skewX(-18)" font-size="9.500" fill="#000">8</text><text transform="translate(1411.2,738) rotate(12) skewX(-18)" font-size="9.500" fill="#000">9</text><text transform="translate(1506.4,736.500) rotate(20) skewX(-18)" font-size="9.500" fill="#000">10</text><text transform="translate(1603.1,736.500) rotate(20) skewX(-18)" font-size="9.500" fill="#000">11</text><text transform="translate(1699.8,736.500) rotate(20) skewX(-18)" font-size="9.500" fill="#000">12</text><text transform="translate(1796.5,736.500) rotate(20) skewX(-18)" font-size="9.500" fill="#000">13</text></svg>
<div class="cb" style="left:444px;top:784px"><i></i><svg width="11" height="11" viewBox="0 0 11 11"><path d="M2.2 4.6L4.4 8.600L8.800 1.600" fill="none" stroke="#3a4a8c" stroke-width="1.900" stroke-linecap="butt"/></svg></div>
<div class="t" style="left:462px;top:784px;color:#ff0000;text-shadow:0 0 0 #ff000080">A相电流(A)</div>
<div class="cb" style="left:534px;top:784px"><i></i><svg width="11" height="11" viewBox="0 0 11 11"><path d="M2.2 4.6L4.4 8.600L8.800 1.600" fill="none" stroke="#3a4a8c" stroke-width="1.900" stroke-linecap="butt"/></svg></div>
<div class="t" style="left:552px;top:784px;color:#008000;text-shadow:0 0 0 #00800080">B相电流(A)</div>
<div class="cb" style="left:624px;top:784px"><i></i><svg width="11" height="11" viewBox="0 0 11 11"><path d="M2.2 4.6L4.4 8.600L8.800 1.600" fill="none" stroke="#3a4a8c" stroke-width="1.900" stroke-linecap="butt"/></svg></div>
<div class="t" style="left:642px;top:784px;color:#0000ff;text-shadow:0 0 0 #0000ff80">C相电流(A)</div>
<div class="cb" style="left:714px;top:784px"><i></i><svg width="11" height="11" viewBox="0 0 11 11"><path d="M2.2 4.6L4.4 8.600L8.800 1.600" fill="none" stroke="#3a4a8c" stroke-width="1.900" stroke-linecap="butt"/></svg></div>
<div class="t" style="left:732px;top:784px;color:#800080;text-shadow:0 0 0 #80008080">零序电流(A)</div>
<div class="a" style="left:439px;top:830px;width:1475px;height:185px;background:#38b6ff"></div>
<div class="t" style="left:461px;top:840px;color:#fff;text-shadow:none">数据分析表</div>
<div class="a" style="left:441px;top:862px;width:1471px;height:151px;background:#ababab"></div>
<div class="a" style="left:437px;top:1015px;width:1478px;height:2px;background:#fff"></div><div class="a" style="left:1914px;top:247px;width:1px;height:770px;background:#fff"></div>
<div class="a" style="left:441px;top:862px;width:1332px;height:113px;background:#a0a0a0"></div><div class="a" style="left:441px;top:862px;width:1332px;height:21px;background:linear-gradient(#ffffff 0,#ffffff 45%,#f2f3f4 55%,#eeeff0 100%);border-bottom:1px solid #d5d5d5"></div><div class="a" style="left:494px;top:862px;width:1px;height:20px;background:#e2e3e5"></div><div class="t" style="left:447px;top:866px">时间</div><div class="a" style="left:536px;top:862px;width:1px;height:20px;background:#e2e3e5"></div><div class="t" style="left:501px;top:866px">0</div><div class="a" style="left:578px;top:862px;width:1px;height:20px;background:#e2e3e5"></div><div class="t" style="left:543px;top:866px">1</div><div class="a" style="left:620px;top:862px;width:1px;height:20px;background:#e2e3e5"></div><div class="t" style="left:585px;top:866px">2</div><div class="a" style="left:662px;top:862px;width:1px;height:20px;background:#e2e3e5"></div><div class="t" style="left:627px;top:866px">3</div><div class="a" style="left:704px;top:862px;width:1px;height:20px;background:#e2e3e5"></div><div class="t" style="left:669px;top:866px">4</div><div class="a" style="left:746px;top:862px;width:1px;height:20px;background:#e2e3e5"></div><div class="t" style="left:711px;top:866px">5</div><div class="a" style="left:788px;top:862px;width:1px;height:20px;background:#e2e3e5"></div><div class="t" style="left:753px;top:866px">6</div><div class="a" style="left:830px;top:862px;width:1px;height:20px;background:#e2e3e5"></div><div class="t" style="left:795px;top:866px">7</div><div class="a" style="left:872px;top:862px;width:1px;height:20px;background:#e2e3e5"></div><div class="t" style="left:837px;top:866px">8</div><div class="a" style="left:914px;top:862px;width:1px;height:20px;background:#e2e3e5"></div><div class="t" style="left:879px;top:866px">9</div><div class="a" style="left:956px;top:862px;width:1px;height:20px;background:#e2e3e5"></div><div class="t" style="left:921px;top:866px">10</div><div class="a" style="left:998px;top:862px;width:1px;height:20px;background:#e2e3e5"></div><div class="t" style="left:963px;top:866px">11</div><div class="a" style="left:1040px;top:862px;width:1px;height:20px;background:#e2e3e5"></div><div class="t" style="left:1005px;top:866px">12</div><div class="a" style="left:1082px;top:862px;width:1px;height:20px;background:#e2e3e5"></div><div class="t" style="left:1047px;top:866px">13</div><div class="a" style="left:1124px;top:862px;width:1px;height:20px;background:#e2e3e5"></div><div class="t" style="left:1089px;top:866px">14</div><div class="a" style="left:1166px;top:862px;width:1px;height:20px;background:#e2e3e5"></div><div class="t" style="left:1131px;top:866px">15</div><div class="a" style="left:1208px;top:862px;width:1px;height:20px;background:#e2e3e5"></div><div class="t" style="left:1173px;top:866px">16</div><div class="a" style="left:1250px;top:862px;width:1px;height:20px;background:#e2e3e5"></div><div class="t" style="left:1215px;top:866px">17</div><div class="a" style="left:1292px;top:862px;width:1px;height:20px;background:#e2e3e5"></div><div class="t" style="left:1257px;top:866px">18</div><div class="a" style="left:1334px;top:862px;width:1px;height:20px;background:#e2e3e5"></div><div class="t" style="left:1299px;top:866px">19</div><div class="a" style="left:1376px;top:862px;width:1px;height:20px;background:#e2e3e5"></div><div class="t" style="left:1341px;top:866px">20</div><div class="a" style="left:1418px;top:862px;width:1px;height:20px;background:#e2e3e5"></div><div class="t" style="left:1383px;top:866px">21</div><div class="a" style="left:1460px;top:862px;width:1px;height:20px;background:#e2e3e5"></div><div class="t" style="left:1425px;top:866px">22</div><div class="a" style="left:1502px;top:862px;width:1px;height:20px;background:#e2e3e5"></div><div class="t" style="left:1467px;top:866px">23</div><div class="a" style="left:1604px;top:862px;width:1px;height:20px;background:#e2e3e5"></div><div class="t" style="left:1509px;top:866px">最大值(时间)</div><div class="a" style="left:1706px;top:862px;width:1px;height:20px;background:#e2e3e5"></div><div class="t" style="left:1611px;top:866px">最小值(时间)</div><div class="a" style="left:1772px;top:862px;width:1px;height:20px;background:#e2e3e5"></div><div class="t" style="left:1713px;top:866px">平均值</div><div class="a" style="left:441px;top:884px;width:53px;height:22px;background:#3399ff"></div><div class="t" style="left:442px;top:888px;color:#fff;text-shadow:none">A相电流</div><div class="a" style="left:495px;top:884px;width:41px;height:22px;background:#ffffff"></div><div class="t" style="left:497px;top:888px;color:#000;letter-spacing:.45px">377.67</div><div class="a" style="left:537px;top:884px;width:41px;height:22px;background:#ffffff"></div><div class="t" style="left:539px;top:888px;color:#000;letter-spacing:.45px">342.57</div><div class="a" style="left:579px;top:884px;width:41px;height:22px;background:#ffffff"></div><div class="t" style="left:581px;top:888px;color:#000;letter-spacing:.45px">333.93</div><div class="a" style="left:621px;top:884px;width:41px;height:22px;background:#ffffff"></div><div class="t" style="left:623px;top:888px;color:#000;letter-spacing:.45px">321.30</div><div class="a" style="left:663px;top:884px;width:41px;height:22px;background:#ffffff"></div><div class="t" style="left:665px;top:888px;color:#000;letter-spacing:.45px">316.90</div><div class="a" style="left:705px;top:884px;width:41px;height:22px;background:#ffffff"></div><div class="t" style="left:707px;top:888px;color:#000;letter-spacing:.45px">340.10</div><div class="a" style="left:747px;top:884px;width:41px;height:22px;background:#ffffff"></div><div class="t" style="left:749px;top:888px;color:#000;letter-spacing:.45px">337.70</div><div class="a" style="left:789px;top:884px;width:41px;height:22px;background:#ffffff"></div><div class="t" style="left:791px;top:888px;color:#000;letter-spacing:.45px">338.03</div><div class="a" style="left:831px;top:884px;width:41px;height:22px;background:#ffffff"></div><div class="t" style="left:833px;top:888px;color:#000;letter-spacing:.45px">351.27</div><div class="a" style="left:873px;top:884px;width:41px;height:22px;background:#ffffff"></div><div class="t" style="left:875px;top:888px;color:#000;letter-spacing:.45px">436.37</div><div class="a" style="left:915px;top:884px;width:41px;height:22px;background:#ffffff"></div><div class="t" style="left:917px;top:888px;color:#000;letter-spacing:.45px">438.77</div><div class="a" style="left:957px;top:884px;width:41px;height:22px;background:#ffffff"></div><div class="t" style="left:959px;top:888px;color:#000;letter-spacing:.45px">394.30</div><div class="a" style="left:999px;top:884px;width:41px;height:22px;background:#ffffff"></div><div class="t" style="left:1001px;top:888px;color:#000;letter-spacing:.45px">408.00</div><div class="a" style="left:1041px;top:884px;width:41px;height:22px;background:#ffffff"></div><div class="t" style="left:1043px;top:888px;color:#000;letter-spacing:.45px">408.43</div><div class="a" style="left:1083px;top:884px;width:41px;height:22px;background:#ffffff"></div><div class="t" style="left:1091px;top:888px;color:#000;letter-spacing:2px">--</div><div class="a" style="left:1125px;top:884px;width:41px;height:22px;background:#ffffff"></div><div class="t" style="left:1133px;top:888px;color:#000;letter-spacing:2px">--</div><div class="a" style="left:1167px;top:884px;width:41px;height:22px;background:#ffffff"></div><div class="t" style="left:1175px;top:888px;color:#000;letter-spacing:2px">--</div><div class="a" style="left:1209px;top:884px;width:41px;height:22px;background:#ffffff"></div><div class="t" style="left:1217px;top:888px;color:#000;letter-spacing:2px">--</div><div class="a" style="left:1251px;top:884px;width:41px;height:22px;background:#ffffff"></div><div class="t" style="left:1259px;top:888px;color:#000;letter-spacing:2px">--</div><div class="a" style="left:1293px;top:884px;width:41px;height:22px;background:#ffffff"></div><div class="t" style="left:1301px;top:888px;color:#000;letter-spacing:2px">--</div><div class="a" style="left:1335px;top:884px;width:41px;height:22px;background:#ffffff"></div><div class="t" style="left:1343px;top:888px;color:#000;letter-spacing:2px">--</div><div class="a" style="left:1377px;top:884px;width:41px;height:22px;background:#ffffff"></div><div class="t" style="left:1385px;top:888px;color:#000;letter-spacing:2px">--</div><div class="a" style="left:1419px;top:884px;width:41px;height:22px;background:#ffffff"></div><div class="t" style="left:1427px;top:888px;color:#000;letter-spacing:2px">--</div><div class="a" style="left:1461px;top:884px;width:41px;height:22px;background:#ffffff"></div><div class="t" style="left:1469px;top:888px;color:#000;letter-spacing:2px">--</div><div class="a" style="left:1503px;top:884px;width:101px;height:22px;background:#ffffff"></div><div class="t" style="left:1505px;top:888px;color:#000;letter-spacing:.45px">438.77(10)</div><div class="a" style="left:1605px;top:884px;width:101px;height:22px;background:#ffffff"></div><div class="t" style="left:1607px;top:888px;color:#000;letter-spacing:.45px">316.9(4)</div><div class="a" style="left:1707px;top:884px;width:65px;height:22px;background:#ffffff"></div><div class="t" style="left:1709px;top:888px;color:#000;letter-spacing:.45px">367.52</div><div class="a" style="left:441px;top:907px;width:53px;height:22px;background:#f0eeee"></div><div class="t" style="left:442px;top:911px;color:#000">B相电流</div><div class="a" style="left:495px;top:907px;width:41px;height:22px;background:#f0eeee"></div><div class="t" style="left:497px;top:911px;color:#000;letter-spacing:.45px">349.37</div><div class="a" style="left:537px;top:907px;width:41px;height:22px;background:#f0eeee"></div><div class="t" style="left:539px;top:911px;color:#000;letter-spacing:.45px">328.67</div><div class="a" style="left:579px;top:907px;width:41px;height:22px;background:#f0eeee"></div><div class="t" style="left:581px;top:911px;color:#000;letter-spacing:.45px">328.33</div><div class="a" style="left:621px;top:907px;width:41px;height:22px;background:#f0eeee"></div><div class="t" style="left:623px;top:911px;color:#000;letter-spacing:.45px">301.77</div><div class="a" style="left:663px;top:907px;width:41px;height:22px;background:#f0eeee"></div><div class="t" style="left:665px;top:911px;color:#000;letter-spacing:.45px">295.63</div><div class="a" style="left:705px;top:907px;width:41px;height:22px;background:#f0eeee"></div><div class="t" style="left:707px;top:911px;color:#000;letter-spacing:.45px">327.97</div><div class="a" style="left:747px;top:907px;width:41px;height:22px;background:#f0eeee"></div><div class="t" style="left:749px;top:911px;color:#000;letter-spacing:.45px">321.37</div><div class="a" style="left:789px;top:907px;width:41px;height:22px;background:#f0eeee"></div><div class="t" style="left:791px;top:911px;color:#000;letter-spacing:.45px">327.20</div><div class="a" style="left:831px;top:907px;width:41px;height:22px;background:#f0eeee"></div><div class="t" style="left:833px;top:911px;color:#000;letter-spacing:.45px">334.63</div><div class="a" style="left:873px;top:907px;width:41px;height:22px;background:#f0eeee"></div><div class="t" style="left:875px;top:911px;color:#000;letter-spacing:.45px">427.20</div><div class="a" style="left:915px;top:907px;width:41px;height:22px;background:#f0eeee"></div><div class="t" style="left:917px;top:911px;color:#000;letter-spacing:.45px">436.47</div><div class="a" style="left:957px;top:907px;width:41px;height:22px;background:#f0eeee"></div><div class="t" style="left:959px;top:911px;color:#000;letter-spacing:.45px">376.53</div><div class="a" style="left:999px;top:907px;width:41px;height:22px;background:#f0eeee"></div><div class="t" style="left:1001px;top:911px;color:#000;letter-spacing:.45px">389.50</div><div class="a" style="left:1041px;top:907px;width:41px;height:22px;background:#f0eeee"></div><div class="t" style="left:1043px;top:911px;color:#000;letter-spacing:.45px">401.53</div><div class="a" style="left:1083px;top:907px;width:41px;height:22px;background:#f0eeee"></div><div class="t" style="left:1091px;top:911px;color:#000;letter-spacing:2px">--</div><div class="a" style="left:1125px;top:907px;width:41px;height:22px;background:#f0eeee"></div><div class="t" style="left:1133px;top:911px;color:#000;letter-spacing:2px">--</div><div class="a" style="left:1167px;top:907px;width:41px;height:22px;background:#f0eeee"></div><div class="t" style="left:1175px;top:911px;color:#000;letter-spacing:2px">--</div><div class="a" style="left:1209px;top:907px;width:41px;height:22px;background:#f0eeee"></div><div class="t" style="left:1217px;top:911px;color:#000;letter-spacing:2px">--</div><div class="a" style="left:1251px;top:907px;width:41px;height:22px;background:#f0eeee"></div><div class="t" style="left:1259px;top:911px;color:#000;letter-spacing:2px">--</div><div class="a" style="left:1293px;top:907px;width:41px;height:22px;background:#f0eeee"></div><div class="t" style="left:1301px;top:911px;color:#000;letter-spacing:2px">--</div><div class="a" style="left:1335px;top:907px;width:41px;height:22px;background:#f0eeee"></div><div class="t" style="left:1343px;top:911px;color:#000;letter-spacing:2px">--</div><div class="a" style="left:1377px;top:907px;width:41px;height:22px;background:#f0eeee"></div><div class="t" style="left:1385px;top:911px;color:#000;letter-spacing:2px">--</div><div class="a" style="left:1419px;top:907px;width:41px;height:22px;background:#f0eeee"></div><div class="t" style="left:1427px;top:911px;color:#000;letter-spacing:2px">--</div><div class="a" style="left:1461px;top:907px;width:41px;height:22px;background:#f0eeee"></div><div class="t" style="left:1469px;top:911px;color:#000;letter-spacing:2px">--</div><div class="a" style="left:1503px;top:907px;width:101px;height:22px;background:#f0eeee"></div><div class="t" style="left:1505px;top:911px;color:#000;letter-spacing:.45px">436.47(10)</div><div class="a" style="left:1605px;top:907px;width:101px;height:22px;background:#f0eeee"></div><div class="t" style="left:1607px;top:911px;color:#000;letter-spacing:.45px">295.63(4)</div><div class="a" style="left:1707px;top:907px;width:65px;height:22px;background:#f0eeee"></div><div class="t" style="left:1709px;top:911px;color:#000;letter-spacing:.45px">353.30</div><div class="a" style="left:441px;top:930px;width:53px;height:22px;background:#ffffff"></div><div class="t" style="left:442px;top:934px;color:#000">C相电流</div><div class="a" style="left:495px;top:930px;width:41px;height:22px;background:#ffffff"></div><div class="t" style="left:497px;top:934px;color:#000;letter-spacing:.45px">349.27</div><div class="a" style="left:537px;top:930px;width:41px;height:22px;background:#ffffff"></div><div class="t" style="left:539px;top:934px;color:#000;letter-spacing:.45px">330.93</div><div class="a" style="left:579px;top:930px;width:41px;height:22px;background:#ffffff"></div><div class="t" style="left:581px;top:934px;color:#000;letter-spacing:.45px">326.23</div><div class="a" style="left:621px;top:930px;width:41px;height:22px;background:#ffffff"></div><div class="t" style="left:623px;top:934px;color:#000;letter-spacing:.45px">305.13</div><div class="a" style="left:663px;top:930px;width:41px;height:22px;background:#ffffff"></div><div class="t" style="left:665px;top:934px;color:#000;letter-spacing:.45px">298.30</div><div class="a" style="left:705px;top:930px;width:41px;height:22px;background:#ffffff"></div><div class="t" style="left:707px;top:934px;color:#000;letter-spacing:.45px">334.43</div><div class="a" style="left:747px;top:930px;width:41px;height:22px;background:#ffffff"></div><div class="t" style="left:749px;top:934px;color:#000;letter-spacing:.45px">327.47</div><div class="a" style="left:789px;top:930px;width:41px;height:22px;background:#ffffff"></div><div class="t" style="left:791px;top:934px;color:#000;letter-spacing:.45px">332.30</div><div class="a" style="left:831px;top:930px;width:41px;height:22px;background:#ffffff"></div><div class="t" style="left:833px;top:934px;color:#000;letter-spacing:.45px">341.40</div><div class="a" style="left:873px;top:930px;width:41px;height:22px;background:#ffffff"></div><div class="t" style="left:875px;top:934px;color:#000;letter-spacing:.45px">438.50</div><div class="a" style="left:915px;top:930px;width:41px;height:22px;background:#ffffff"></div><div class="t" style="left:917px;top:934px;color:#000;letter-spacing:.45px">454.00</div><div class="a" style="left:957px;top:930px;width:41px;height:22px;background:#ffffff"></div><div class="t" style="left:959px;top:934px;color:#000;letter-spacing:.45px">387.87</div><div class="a" style="left:999px;top:930px;width:41px;height:22px;background:#ffffff"></div><div class="t" style="left:1001px;top:934px;color:#000;letter-spacing:.45px">388.00</div><div class="a" style="left:1041px;top:930px;width:41px;height:22px;background:#ffffff"></div><div class="t" style="left:1043px;top:934px;color:#000;letter-spacing:.45px">398.27</div><div class="a" style="left:1083px;top:930px;width:41px;height:22px;background:#ffffff"></div><div class="t" style="left:1091px;top:934px;color:#000;letter-spacing:2px">--</div><div class="a" style="left:1125px;top:930px;width:41px;height:22px;background:#ffffff"></div><div class="t" style="left:1133px;top:934px;color:#000;letter-spacing:2px">--</div><div class="a" style="left:1167px;top:930px;width:41px;height:22px;background:#ffffff"></div><div class="t" style="left:1175px;top:934px;color:#000;letter-spacing:2px">--</div><div class="a" style="left:1209px;top:930px;width:41px;height:22px;background:#ffffff"></div><div class="t" style="left:1217px;top:934px;color:#000;letter-spacing:2px">--</div><div class="a" style="left:1251px;top:930px;width:41px;height:22px;background:#ffffff"></div><div class="t" style="left:1259px;top:934px;color:#000;letter-spacing:2px">--</div><div class="a" style="left:1293px;top:930px;width:41px;height:22px;background:#ffffff"></div><div class="t" style="left:1301px;top:934px;color:#000;letter-spacing:2px">--</div><div class="a" style="left:1335px;top:930px;width:41px;height:22px;background:#ffffff"></div><div class="t" style="left:1343px;top:934px;color:#000;letter-spacing:2px">--</div><div class="a" style="left:1377px;top:930px;width:41px;height:22px;background:#ffffff"></div><div class="t" style="left:1385px;top:934px;color:#000;letter-spacing:2px">--</div><div class="a" style="left:1419px;top:930px;width:41px;height:22px;background:#ffffff"></div><div class="t" style="left:1427px;top:934px;color:#000;letter-spacing:2px">--</div><div class="a" style="left:1461px;top:930px;width:41px;height:22px;background:#ffffff"></div><div class="t" style="left:1469px;top:934px;color:#000;letter-spacing:2px">--</div><div class="a" style="left:1503px;top:930px;width:101px;height:22px;background:#ffffff"></div><div class="t" style="left:1505px;top:934px;color:#000;letter-spacing:.45px">454(10)</div><div class="a" style="left:1605px;top:930px;width:101px;height:22px;background:#ffffff"></div><div class="t" style="left:1607px;top:934px;color:#000;letter-spacing:.45px">298.3(4)</div><div class="a" style="left:1707px;top:930px;width:65px;height:22px;background:#ffffff"></div><div class="t" style="left:1709px;top:934px;color:#000;letter-spacing:.45px">358.01</div><div class="a" style="left:441px;top:953px;width:53px;height:22px;background:#f0eeee"></div><div class="t" style="left:442px;top:957px;color:#000">零序电流</div><div class="a" style="left:495px;top:953px;width:41px;height:22px;background:#f0eeee"></div><div class="t" style="left:497px;top:957px;color:#000;letter-spacing:.45px">0.00</div><div class="a" style="left:537px;top:953px;width:41px;height:22px;background:#f0eeee"></div><div class="t" style="left:539px;top:957px;color:#000;letter-spacing:.45px">0.00</div><div class="a" style="left:579px;top:953px;width:41px;height:22px;background:#f0eeee"></div><div class="t" style="left:581px;top:957px;color:#000;letter-spacing:.45px">0.00</div><div class="a" style="left:621px;top:953px;width:41px;height:22px;background:#f0eeee"></div><div class="t" style="left:623px;top:957px;color:#000;letter-spacing:.45px">0.00</div><div class="a" style="left:663px;top:953px;width:41px;height:22px;background:#f0eeee"></div><div class="t" style="left:665px;top:957px;color:#000;letter-spacing:.45px">0.00</div><div class="a" style="left:705px;top:953px;width:41px;height:22px;background:#f0eeee"></div><div class="t" style="left:707px;top:957px;color:#000;letter-spacing:.45px">0.00</div><div class="a" style="left:747px;top:953px;width:41px;height:22px;background:#f0eeee"></div><div class="t" style="left:749px;top:957px;color:#000;letter-spacing:.45px">0.00</div><div class="a" style="left:789px;top:953px;width:41px;height:22px;background:#f0eeee"></div><div class="t" style="left:791px;top:957px;color:#000;letter-spacing:.45px">0.00</div><div class="a" style="left:831px;top:953px;width:41px;height:22px;background:#f0eeee"></div><div class="t" style="left:833px;top:957px;color:#000;letter-spacing:.45px">0.00</div><div class="a" style="left:873px;top:953px;width:41px;height:22px;background:#f0eeee"></div><div class="t" style="left:875px;top:957px;color:#000;letter-spacing:.45px">0.00</div><div class="a" style="left:915px;top:953px;width:41px;height:22px;background:#f0eeee"></div><div class="t" style="left:917px;top:957px;color:#000;letter-spacing:.45px">0.00</div><div class="a" style="left:957px;top:953px;width:41px;height:22px;background:#f0eeee"></div><div class="t" style="left:959px;top:957px;color:#000;letter-spacing:.45px">0.00</div><div class="a" style="left:999px;top:953px;width:41px;height:22px;background:#f0eeee"></div><div class="t" style="left:1001px;top:957px;color:#000;letter-spacing:.45px">0.00</div><div class="a" style="left:1041px;top:953px;width:41px;height:22px;background:#f0eeee"></div><div class="t" style="left:1043px;top:957px;color:#000;letter-spacing:.45px">0.00</div><div class="a" style="left:1083px;top:953px;width:41px;height:22px;background:#f0eeee"></div><div class="t" style="left:1091px;top:957px;color:#000;letter-spacing:2px">--</div><div class="a" style="left:1125px;top:953px;width:41px;height:22px;background:#f0eeee"></div><div class="t" style="left:1133px;top:957px;color:#000;letter-spacing:2px">--</div><div class="a" style="left:1167px;top:953px;width:41px;height:22px;background:#f0eeee"></div><div class="t" style="left:1175px;top:957px;color:#000;letter-spacing:2px">--</div><div class="a" style="left:1209px;top:953px;width:41px;height:22px;background:#f0eeee"></div><div class="t" style="left:1217px;top:957px;color:#000;letter-spacing:2px">--</div><div class="a" style="left:1251px;top:953px;width:41px;height:22px;background:#f0eeee"></div><div class="t" style="left:1259px;top:957px;color:#000;letter-spacing:2px">--</div><div class="a" style="left:1293px;top:953px;width:41px;height:22px;background:#f0eeee"></div><div class="t" style="left:1301px;top:957px;color:#000;letter-spacing:2px">--</div><div class="a" style="left:1335px;top:953px;width:41px;height:22px;background:#f0eeee"></div><div class="t" style="left:1343px;top:957px;color:#000;letter-spacing:2px">--</div><div class="a" style="left:1377px;top:953px;width:41px;height:22px;background:#f0eeee"></div><div class="t" style="left:1385px;top:957px;color:#000;letter-spacing:2px">--</div><div class="a" style="left:1419px;top:953px;width:41px;height:22px;background:#f0eeee"></div><div class="t" style="left:1427px;top:957px;color:#000;letter-spacing:2px">--</div><div class="a" style="left:1461px;top:953px;width:41px;height:22px;background:#f0eeee"></div><div class="t" style="left:1469px;top:957px;color:#000;letter-spacing:2px">--</div><div class="a" style="left:1503px;top:953px;width:101px;height:22px;background:#f0eeee"></div><div class="t" style="left:1505px;top:957px;color:#000;letter-spacing:.45px">0(0)</div><div class="a" style="left:1605px;top:953px;width:101px;height:22px;background:#f0eeee"></div><div class="t" style="left:1607px;top:957px;color:#000;letter-spacing:.45px">0(0)</div><div class="a" style="left:1707px;top:953px;width:65px;height:22px;background:#f0eeee"></div><div class="t" style="left:1709px;top:957px;color:#000;letter-spacing:.45px">0.00</div>
</div></body></html>
